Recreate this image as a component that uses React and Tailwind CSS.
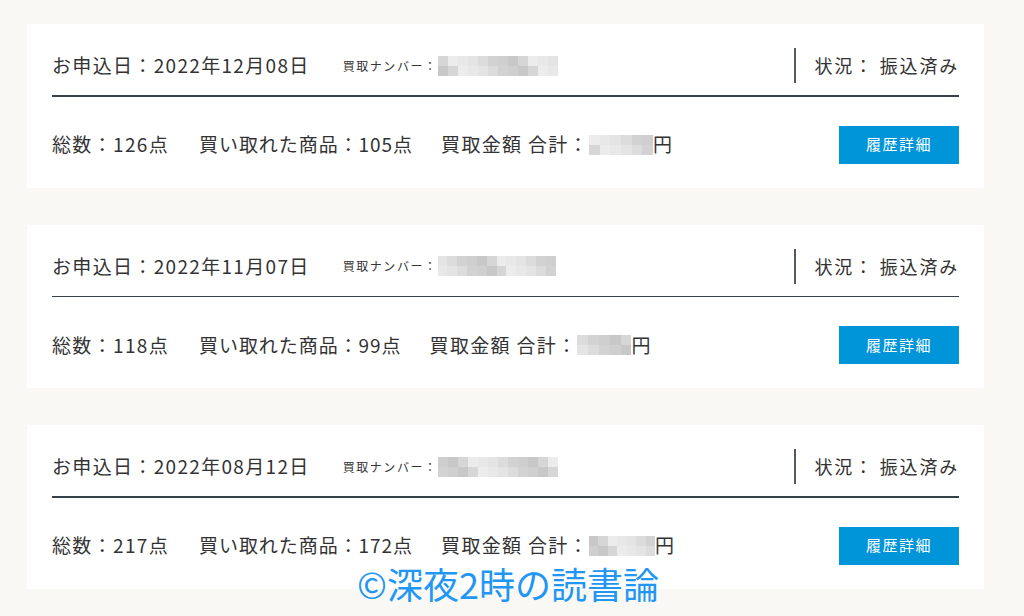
const orders = [
  { date: "2022年12月08日", total: "126", bought: "105", numW: 120, amtW: 64 },
  { date: "2022年11月07日", total: "118", bought: "99", numW: 118, amtW: 54 },
  { date: "2022年08月12日", total: "217", bought: "172", numW: 120, amtW: 66 },
];

const greys = ["#d6d6d6", "#e4e4e4", "#cfcfcf", "#ececec", "#dcdcdc", "#c8c8c8", "#e8e8e8", "#d2d2d2"];

function Blur({ w, h, seed }) {
  const cols = Math.round(w / 10);
  const cells = [];
  for (let r = 0; r < 2; r++) {
    for (let c = 0; c < cols; c++) {
      cells.push(greys[(c * 3 + r * 5 + seed) % greys.length]);
    }
  }
  return (
    <div
      className="grid"
      style={{ width: w, height: h, gridTemplateColumns: `repeat(${cols}, 1fr)` }}
    >
      {cells.map((c, i) => (
        <div key={i} style={{ background: c }} />
      ))}
    </div>
  );
}

function Card({ o, i }) {
  return (
    <div className="bg-white px-[25px] pt-[24px] pb-[24px]">
      <div className="flex items-center h-[35px]">
        <span className="text-[19px] tracking-[0.07em]">お申込日：{o.date}</span>
        <span className="ml-[33px] text-[12px] tracking-[0.13em]">買取ナンバー：</span>
        <Blur w={o.numW} h={20} seed={i} />
        <div className="ml-auto w-[2px] h-[35px] bg-[#555a5c]" />
        <span className="ml-[19px] text-[18px] tracking-[0.1em]">状況：&nbsp;振込済み</span>
      </div>
      <div className="mt-[12px] h-[1.5px] bg-[#34424a]" />
      <div className="flex items-center mt-[29px] text-[19px] tracking-[0.07em]">
        <span>総数：{o.total}点</span>
        <span className="ml-[30px] tracking-[0.05em]">買い取れた商品：{o.bought}点</span>
        <span className="ml-[28px]">買取金額 合計：</span>
        <Blur w={o.amtW} h={20} seed={i + 3} />
        <span>円</span>
        <button className="ml-auto w-[120px] h-[38px] bg-[#0095d9] text-white text-[15px] tracking-[0.1em]">
          履歴詳細
        </button>
      </div>
    </div>
  );
}

export default function App() {
  return (
    <div
      className="relative w-[1024px] h-[616px] overflow-hidden bg-[#f9f8f4] text-[#333333]"
      style={{ fontFamily: '"Noto Sans CJK JP", "Noto Sans", sans-serif' }}
    >
      <div className="ml-[27px] mr-[40px] pt-[24px] flex flex-col gap-[37px]">
        {orders.map((o, i) => (
          <Card key={i} o={o} i={i} />
        ))}
      </div>
      <div className="absolute left-[357px] top-[560px] text-[36px] leading-[46px] text-[#2196f3]">
        ©深夜2時の読書論
      </div>
    </div>
  );
}
